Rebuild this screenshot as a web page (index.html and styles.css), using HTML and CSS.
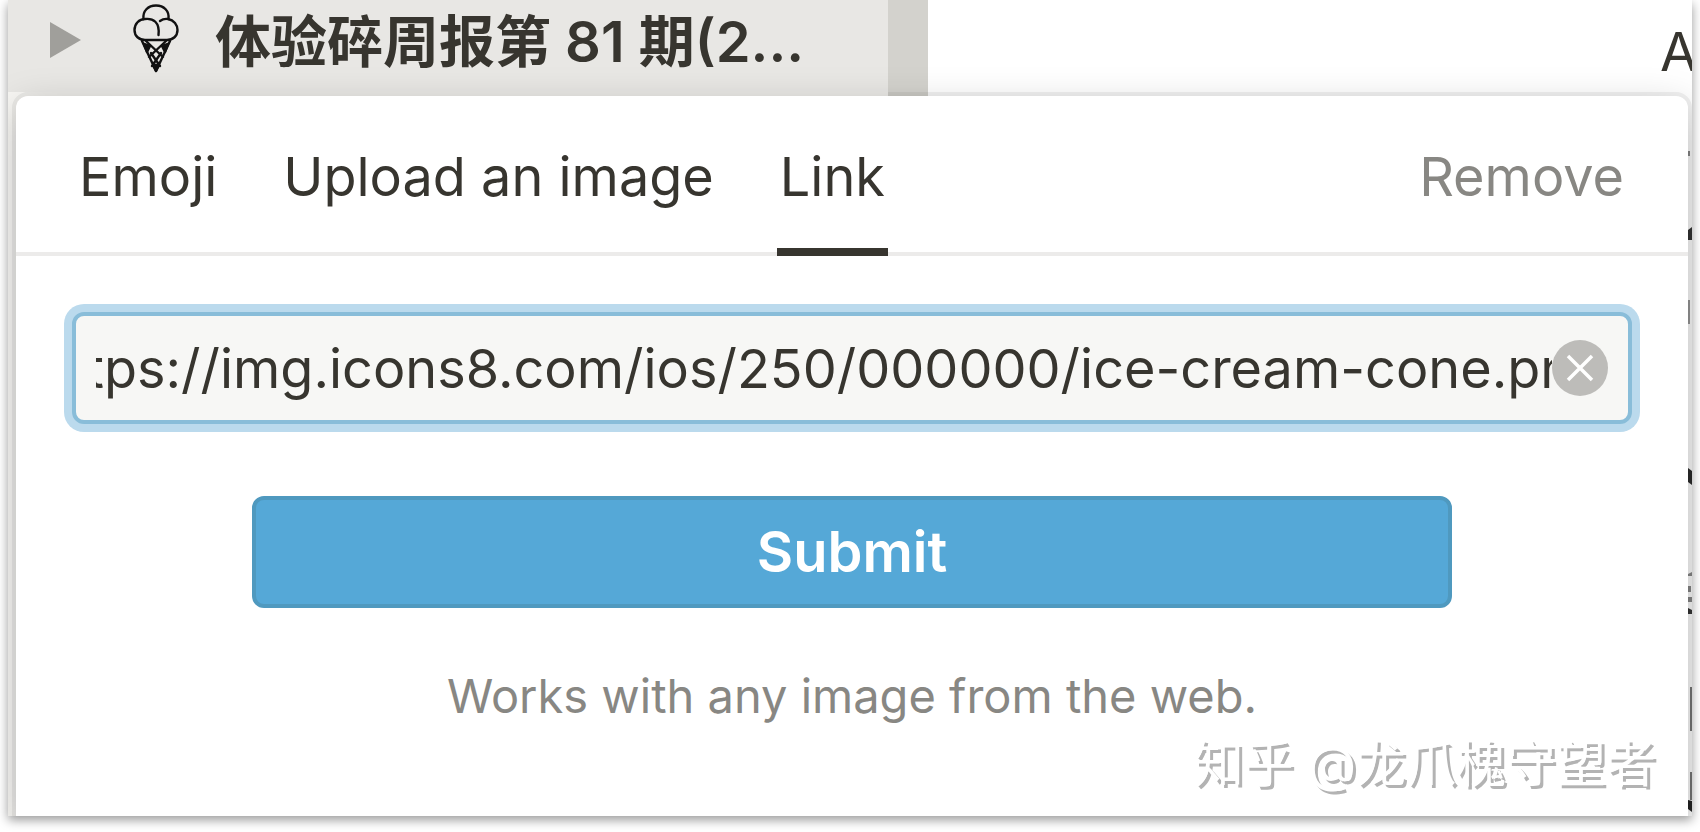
FILE: index.html
```html
<!DOCTYPE html>
<html lang="en">
<head>
<meta charset="utf-8">
<meta name="viewport" content="width=device-width, initial-scale=1">
<title>Page icon</title>
<link rel="stylesheet" href="styles.css">
</head>
<body>
<main class="frame">
  <div class="workspace">
    <nav class="sidebar" aria-label="Pages">
      <div class="page-row">
        <button class="toggle" type="button" aria-label="Expand">
          <svg width="32" height="40" viewBox="0 0 32 40"><path d="M1 0 L32 18 L1 36 Z" fill="#a09f9b"/></svg>
        </button>
        <svg class="cone" width="46" height="76" viewBox="0 0 46 76" fill="none" stroke="#111" stroke-width="2.4" stroke-linejoin="round" stroke-linecap="round" aria-hidden="true">
          <path d="M10.500 15C9.500 7 15 1.500 23 1.500S36.500 7 35.500 15"/>
          <path d="M27 17C29 15.500 32 14.500 35 15C41 16 44.500 21 44.500 26C44.500 32 40 36 34 36H12C6 36 1.500 32 1.500 26C1.500 20 6 15 12 15C20 14 27 18 25.500 31"/>
          <path d="M9 37L23 67L37 37M13 37L30 53M33 37L16 53M18 49L27 62M28 49L19 62"/>
          <path d="M11 40L17 42L14 48ZM35 40L29 42L32 48ZM20 61L26 61L23 67Z" fill="#111"/>
        </svg>
        <span class="page-title">体验碎周报第 81 期(2...</span>
      </div>
    </nav>
    <div class="gutter"></div>
    <div class="content">
      <p class="content-text">A</p>
      <svg class="edge" width="4" height="736" viewBox="0 0 4 736" aria-hidden="true">
        <path d="M0 71h2v5H0z" fill="#888"/>
        <path d="M0 150l4-3v13H0z" fill="#333"/>
        <path d="M0 220h2v24H0z" fill="#999"/>
        <path d="M0 388l4 3v14l-4-3z" fill="#2b2b2b"/>
        <path d="M0 494l4-2v4H0zM0 506h3v6H0zM0 517h4v5H0z" fill="#888"/>
        <path d="M0 528l4 2v4H0z" fill="#333"/>
        <path d="M2 607h2v44H2zM2 692h2v28H2z" fill="#777"/>
        <path d="M0 720l4 1v11l-4-3z" fill="#222"/>
      </svg>
    </div>
  </div>

  <section class="picker" aria-label="Change icon">
    <header class="picker-head">
      <div class="tabs" role="tablist">
        <button class="tab" type="button" role="tab">Emoji</button>
        <button class="tab" type="button" role="tab">Upload an image</button>
        <button class="tab active" type="button" role="tab" aria-selected="true">Link</button>
      </div>
      <button class="remove" type="button">Remove</button>
    </header>
    <form class="picker-body">
      <div class="field">
        <input class="url" id="url" type="text" aria-label="Image link" value="https://img.icons8.com/ios/250/000000/ice-cream-cone.png">
        <button class="clear" type="button" aria-label="Clear">
          <svg width="56" height="56" viewBox="0 0 56 56"><circle cx="28" cy="28" r="28" fill="#bdbcb9"/><path d="M16 16L40 40M40 16L16 40" stroke="#fff" stroke-width="3.500"/></svg>
        </button>
      </div>
      <button class="submit" type="button">Submit</button>
      <p class="hint">Works with any image from the web.</p>
    </form>
    <p class="watermark">知乎 @龙爪槐守望者</p>
  </section>
</main>
<script src="main.js"></script>
</body>
</html>
```
FILE: main.js
```js
const url = document.getElementById("url");
url.scrollLeft = 58;
```
FILE: styles.css
```css
* { box-sizing: border-box; }
body {
  margin: 0;
  background: #fff;
  color: #37352f;
  font-family: Inter, "Noto Sans CJK SC", sans-serif;
  font-size: 54px;
}
p { margin: 0; }
button {
  padding: 0;
  border: 0;
  background: none;
  color: inherit;
  font: inherit;
  cursor: pointer;
}
svg { display: block; }

.frame {
  display: grid;
  margin: 0 8px 16px;
  overflow: hidden;
  overflow: clip;
  box-shadow: 0 4px 10px rgba(0, 0, 0, 0.4);
}
.workspace, .picker { grid-area: 1 / 1; min-width: 0; }

.workspace {
  display: grid;
  grid-template-columns: 880px 40px 1fr;
  overflow: hidden;
}
.sidebar { background: #f7f6f3; }
.page-row {
  display: flex;
  align-items: center;
  height: 92px;
  padding: 0 32px 8px 41px;
  background: #e8e7e4;
}
.cone { margin: 0 36px 0 52px; }
.page-title {
  font-size: 56px;
  font-weight: 600;
  line-height: 80px;
  white-space: nowrap;
}
.gutter { background: #d3d2cd; }
.content {
  display: flex;
  flex-direction: column;
  align-items: flex-end;
  min-width: 0;
}
.content-text {
  width: 32px;
  height: 80px;
  line-height: 104px;
}

.picker {
  display: flex;
  flex-direction: column;
  margin: 96px 4px 0 8px;
  background: #fff;
  border-radius: 12px 12px 0 0;
  box-shadow: 0 0 0 4px rgba(15, 15, 15, 0.06), 0 12px 40px rgba(15, 15, 15, 0.22);
}
.picker-head {
  display: flex;
  justify-content: space-between;
  height: 160px;
  padding: 0 64px 0 60px;
  border-bottom: 4px solid #ecebea;
}
.tabs { display: flex; gap: 60px; }
.tab, .remove { height: 160px; white-space: nowrap; }
.tab { padding: 8px 3px 0; border-bottom: 8px solid transparent; }
.tab.active { border-bottom-color: #37352f; }
.remove { color: #888783; }

.picker-body {
  display: flex;
  flex-direction: column;
  align-items: center;
  padding: 56px 56px 0;
}
.field {
  display: flex;
  align-items: center;
  align-self: stretch;
  height: 112px;
  padding: 0 20px;
  border: 4px solid #89bdd9;
  border-radius: 12px;
  background: #f7f7f5;
  box-shadow: 0 0 0 8px #bbdaed;
}
.url {
  flex: 1;
  min-width: 0;
  height: 88px;
  padding: 0;
  border: 0;
  outline: 0;
  background: none;
  color: inherit;
  font: inherit;
}
.submit {
  width: 1200px;
  max-width: 100%;
  height: 112px;
  margin-top: 72px;
  border: 4px solid #4f99bf;
  border-radius: 12px;
  background: #55a8d7;
  color: #fff;
  font-size: 56px;
  font-weight: 600;
}
.hint {
  margin-top: 56px;
  color: #888783;
  font-size: 47px;
  line-height: 64px;
}
.watermark {
  align-self: flex-end;
  padding: 0 32px 16px 0;
  color: #fff;
  font-size: 50px;
  line-height: 72px;
  text-shadow: 3px 3px 0 #b3b3b3;
}
```
